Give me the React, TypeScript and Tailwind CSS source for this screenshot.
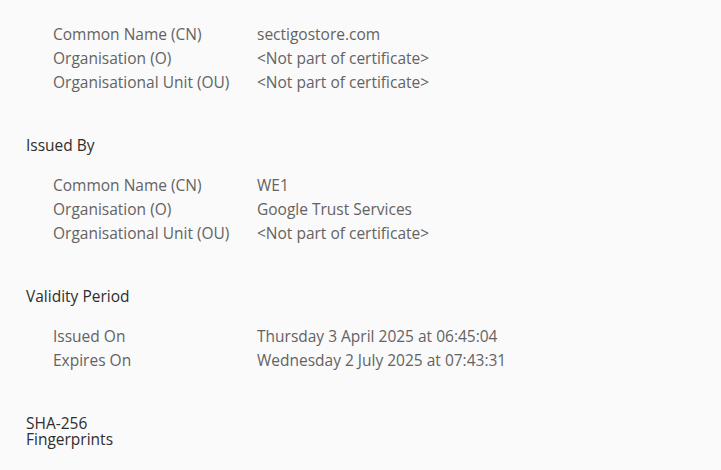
import React from "react";

type Row = [string, string];

const Section = ({ title, rows, className = "" }: { title: string; rows: Row[]; className?: string }) => (
  <div className={className}>
    <div className="h-6 leading-6 text-[#2e2e2e]">{title}</div>
    <div className="mt-[17px] flex flex-col">
      {rows.map(([k, v]) => (
        <div key={k} className="flex h-6 items-center">
          <div className="w-[231px] shrink-0 pl-[27px] text-[#636363]">{k}</div>
          <div className="text-[#636363]">{v}</div>
        </div>
      ))}
    </div>
  </div>
);

export default function App() {
  return (
    <div
      className="h-[470px] w-[721px] overflow-hidden bg-[#fafafa] pl-[26px] text-[15.5px]"
      style={{ fontFamily: '"Open Sans", "Noto Sans", sans-serif' }}
    >
      <div className="-mt-[18px]">
        <Section
          title="Issued To"
          rows={[
            ["Common Name (CN)", "sectigostore.com"],
            ["Organisation (O)", "<Not part of certificate>"],
            ["Organisational Unit (OU)", "<Not part of certificate>"],
          ]}
        />
        <Section
          className="mt-[38px]"
          title="Issued By"
          rows={[
            ["Common Name (CN)", "WE1"],
            ["Organisation (O)", "Google Trust Services"],
            ["Organisational Unit (OU)", "<Not part of certificate>"],
          ]}
        />
        <Section
          className="mt-[38px]"
          title="Validity Period"
          rows={[
            ["Issued On", "Thursday 3 April 2025 at 06:45:04"],
            ["Expires On", "Wednesday 2 July 2025 at 07:43:31"],
          ]}
        />
        <div className="mt-[42px] leading-[16px] text-[#2e2e2e]">
          SHA-256
          <br />
          Fingerprints
        </div>
      </div>
    </div>
  );
}
